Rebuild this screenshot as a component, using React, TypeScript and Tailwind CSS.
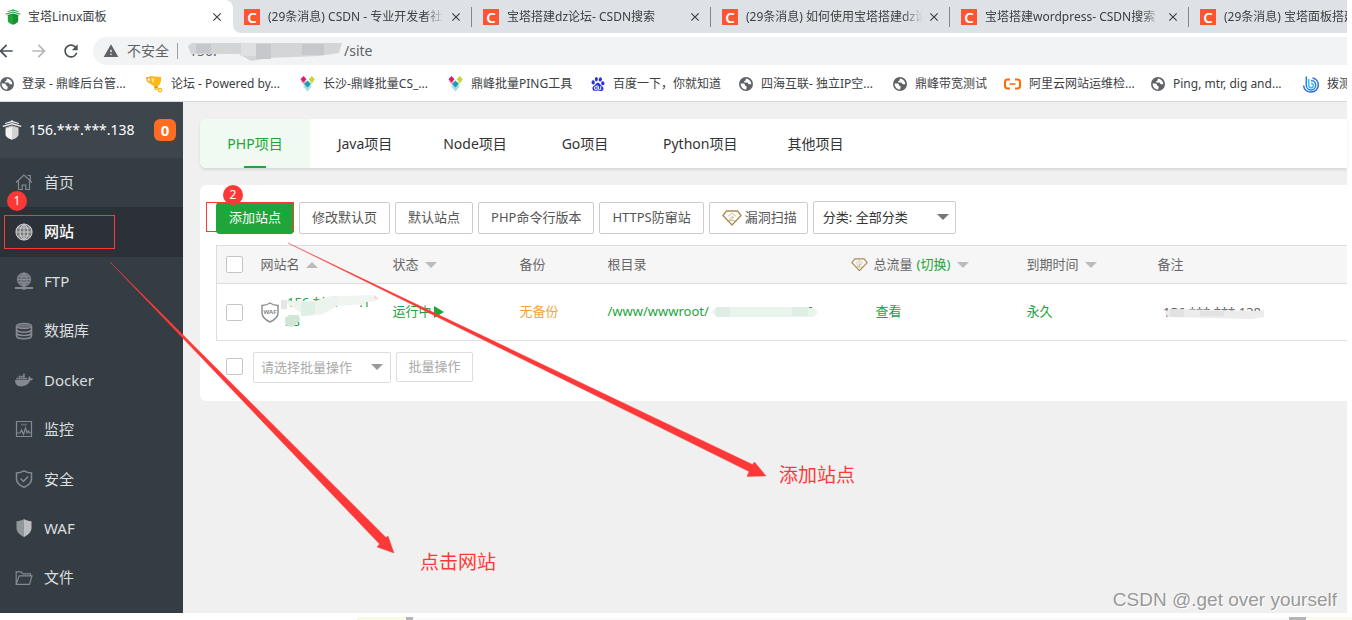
import type { ReactNode } from "react";
import clsx from "clsx";
import { FaDocker } from "react-icons/fa";
import { MdArrowBack, MdArrowForward, MdClose, MdRefresh, MdWarning } from "react-icons/md";
import { SiBaidu } from "react-icons/si";

/* ---------- icons ---------- */

function PagodaIcon({ size, className }: { size: number; className?: string }) {
  return (
    <svg width={size} height={size} viewBox="0 0 20 20" className={clsx("shrink-0", className)}>
      <path d="M10 0l1.500 1.300 5.500 1.600-.2 1L10 2.200 3.200 3.900 3 2.900l5.500-1.600z" fill="currentColor" />
      <path d="M10 3l9.500 2.800-.6 1.300L10 4.500 1.100 7.100.5 5.800z" fill="currentColor" />
      <path d="M10 5.500l6.500 2v6.800c0 2.600-3 4.200-6.500 5.500-3.500-1.300-6.500-2.900-6.500-5.500V7.500z" fill="currentColor" />
      <path d="M3 8.300L10 6.200l7 2.100" fill="none" stroke="#000" strokeWidth=".8" opacity=".3" />
      <path d="M10 7v12.800c3.500-1.300 6.500-2.900 6.500-5.500V8.800z" fill="#000" opacity=".13" />
    </svg>
  );
}

function CsdnIcon() {
  return (
    <span className="flex h-4 w-4 shrink-0 items-center justify-center bg-[#fc5531] text-[15px] leading-4 font-semibold text-white">
      C
    </span>
  );
}

function EarthIcon() {
  return (
    <svg width="14" height="14" viewBox="0 0 14 14" className="shrink-0">
      <circle cx="7" cy="7" r="7" fill="#5f6368" />
      <path d="M7.500 1.600C6 2.200 7.400 3.600 5.800 4c-1.200.3-.8 1.600.4 1.600h1.600c1.500 0 1 1.700 2.400 1.700h2.100c0-2.300-1.600-4.800-4.800-5.700z" fill="#fff" />
      <path d="M1.700 6.400h2.500c1.300 0 1.700.7 1.700 1.600 0 1 1.800.7 1.800 2 0 .9-.5 1.300-.5 2.500C3.800 12.500 1.400 9.600 1.700 6.400z" fill="#fff" />
    </svg>
  );
}

function TrophyIcon() {
  return (
    <svg width="17" height="17" viewBox="0 0 17 17" className="shrink-0">
      <path d="M3.500 0l11.500 1c.6 4-1 8-3.500 9.500C8.500 11 4.500 9 3.500 5.500z" fill="#fdb913" />
      <path d="M3.600 1.700H.8c0 2.600 1.400 4.600 4 5.300" fill="none" stroke="#f5a623" strokeWidth="1.400" />
      <path d="M5.500 2l3 .2-1 5c-1.300-1-2-3-2-5.200z" fill="#ffe28a" />
      <path d="M8 10.500l3-.4 1 1.800-3.500.6z" fill="#e89005" />
      <circle cx="14" cy="14.200" r="1.700" fill="none" stroke="#fdb913" strokeWidth="1.300" />
      <path d="M8 12.800l4-.6 1 1.400-4 .4z" fill="#fdb913" />
    </svg>
  );
}

function PetalsIcon() {
  return (
    <svg width="15" height="16" viewBox="0 0 15 16" className="shrink-0">
      <path d="M.5 5L4 3l3 4-1 4z" fill="#f6a9c4" />
      <path d="M14.500 5L11 4 8.500 7 9 11z" fill="#dfe9a0" />
      <path d="M3 10l4.500-1 4.500 1-4.500 5.500z" fill="#a9dce4" />
      <path d="M3.500 0l3 3.300-3 3.200-3-3.200z" fill="#e6176f" />
      <path d="M11.800 0l3 3.300-3 3.200-3-3.200z" fill="#c3d72f" />
      <path d="M7.500 4.500l3.300 3.500-3.300 3.500L4.200 8z" fill="#12a3b8" />
    </svg>
  );
}

function AliyunIcon() {
  return (
    <svg width="17" height="12" viewBox="0 0 17 12" className="shrink-0">
      <path d="M6 1.500H3.700C2.100 1.500 1 2.300 1 3.900v4.200c0 1.600 1.100 2.400 2.700 2.400H6M11 1.500h2.300c1.600 0 2.700.8 2.700 2.400v4.200c0 1.600-1.100 2.400-2.700 2.400H11" fill="none" stroke="#ff6a00" strokeWidth="2" />
      <path d="M5.500 5.300h6v1.500h-6z" fill="#ff6a00" />
    </svg>
  );
}

function DialIcon() {
  return (
    <svg width="16" height="17" viewBox="0 0 16 17" className="shrink-0">
      <path d="M3.300.6v8.600a4.700 4.700 0 1 0 4.700-4.700" fill="none" stroke="#1e80f0" strokeWidth="1.500" />
      <path d="M5.800 3v6.400a2.300 2.300 0 1 0 2.300-2.200" fill="none" stroke="#2fb5f5" strokeWidth="1.400" />
      <path d="M.6 9.500C1 13.500 4 16 8 16c4.300 0 7.300-3 7.300-7S12.500 2.500 9.500 2" fill="none" stroke="#2b6cf0" strokeWidth="1.500" />
    </svg>
  );
}

function GemIcon({ size }: { size: number }) {
  return (
    <svg width={size} height={size * 0.8} viewBox="0 0 20 16" className="shrink-0" fill="none" stroke="#a98a52">
      <path d="M4.500 1h11L19 5.500 10 15 1 5.500z" strokeWidth="1.300" strokeLinejoin="round" />
      <path d="M10 3L6 6.300M10 3l4 3.300M10 5.500v5M10 7.500h2.200M8 7.300v3.200M6.600 10.600h6.800" strokeWidth=".8" stroke="#c3ab7c" />
    </svg>
  );
}

function WafBadge() {
  return (
    <svg width="18" height="21" viewBox="0 0 18 21" className="shrink-0">
      <path d="M9 1c2.500 1.700 5 2.300 8 2.500v7.300c0 4.200-3.400 7.200-8 9.200-4.600-2-8-5-8-9.200V3.500C4 3.300 6.500 2.700 9 1z" fill="#fff" stroke="#8f8f8f" strokeWidth="1.500" />
      <text x="9" y="12" fontSize="6" fontWeight="700" textAnchor="middle" fill="#8a8a8a">WAF</text>
    </svg>
  );
}

function Triangle({ up, className }: { up?: boolean; className?: string }) {
  return (
    <svg width="12" height="6" viewBox="0 0 12 6" className={clsx("shrink-0", className)}>
      <path d={up ? "M0 6h12L6 0z" : "M0 0h12L6 6z"} fill="currentColor" />
    </svg>
  );
}

function LineIcon({ children }: { children: ReactNode }) {
  return (
    <svg width="18" height="18" viewBox="0 0 18 18" fill="none" stroke="currentColor" strokeWidth="1.200" className="shrink-0">
      {children}
    </svg>
  );
}

const globeLines = "M9 1v16M1 9h16M2.300 5h13.400M2.300 13h13.400M9 1C3.700 5 3.700 13 9 17M9 1c5.300 4 5.300 12 0 16";

/* ---------- data ---------- */

const browserTabs = [
  "(29条消息) CSDN - 专业开发者社",
  "宝塔搭建dz论坛- CSDN搜索",
  "(29条消息) 如何使用宝塔搭建dz论",
  "宝塔搭建wordpress- CSDN搜索",
  "(29条消息) 宝塔面板搭建",
];

const bookmarks = [
  { label: "登录 - 鼎峰后台管...", icon: <EarthIcon />, width: "w-[146px]" },
  { label: "论坛 - Powered by...", icon: <TrophyIcon />, width: "w-[154px]" },
  { label: "长沙-鼎峰批量CS_...", icon: <PetalsIcon />, width: "w-[148px]" },
  { label: "鼎峰批量PING工具", icon: <PetalsIcon />, width: "w-[143px]" },
  { label: "百度一下，你就知道", icon: <SiBaidu size={14} className="shrink-0 text-[#2932e1]" />, width: "w-[148px]" },
  { label: "四海互联- 独立IP空...", icon: <EarthIcon />, width: "w-[154px]" },
  { label: "鼎峰带宽测试", icon: <EarthIcon />, width: "w-[111px]" },
  { label: "阿里云网站运维检...", icon: <AliyunIcon />, width: "w-[147px]" },
  { label: "Ping, mtr, dig and...", icon: <EarthIcon />, width: "w-[152px]" },
  { label: "拨测", icon: <DialIcon />, width: "w-[60px]" },
];

const menu = [
  {
    label: "首页",
    icon: (
      <LineIcon>
        <path d="M1 9.500L9 2l8 7.500M12.500 2.500h2.800V7M3.500 8v8.500h3.700V12h3.600v4.500h3.700V8" />
      </LineIcon>
    ),
  },
  {
    label: "网站",
    active: true,
    icon: (
      <LineIcon>
        <circle cx="9" cy="9" r="8" fill="#777" />
        <path d={globeLines} />
      </LineIcon>
    ),
  },
  {
    label: "FTP",
    icon: (
      <LineIcon>
        <circle cx="9" cy="7.500" r="6.500" fill="#5d646a" />
        <path d="M9 1v13M2.500 7.500h13M3.800 4.500h10.400M3.800 10.500h10.400M9 1C5 4 5 11 9 14M9 1c4 3 4 10 0 13" />
        <path d="M0 16h18" strokeWidth="2" />
        <circle cx="9" cy="16" r="1.300" fill="currentColor" />
      </LineIcon>
    ),
  },
  {
    label: "数据库",
    icon: (
      <LineIcon>
        <ellipse cx="9" cy="4" rx="7.500" ry="2.700" fill="#6a7076" />
        <path d="M1.500 4v10c0 1.500 3.400 2.700 7.500 2.700s7.500-1.200 7.500-2.700V4M1.500 7.500c0 1.500 3.400 2.700 7.500 2.700s7.500-1.200 7.500-2.700M1.500 10.800c0 1.500 3.400 2.700 7.500 2.700s7.500-1.200 7.500-2.700" strokeWidth="1.600" />
      </LineIcon>
    ),
  },
  { label: "Docker", icon: <FaDocker size={18} className="shrink-0" /> },
  {
    label: "监控",
    icon: (
      <LineIcon>
        <path d="M1.500 1.500h15v15h-15zM1.500 13H5l1.500-3 2 4.500L10.500 8l1.500 5 1.500-2 1 2h2" />
        <path d="M6 4.700h6" strokeWidth="2" opacity=".5" />
      </LineIcon>
    ),
  },
  {
    label: "安全",
    icon: (
      <LineIcon>
        <path d="M9 .8c2.400 1.400 4.700 2 7.500 2.200v6c0 3.800-3.200 6.500-7.500 8.300C4.700 15.500 1.500 12.800 1.500 9V3C4.300 2.800 6.600 2.200 9 .8z" strokeWidth="1.500" />
        <path d="M5.500 8.500l3 3 4.500-5" strokeWidth="1.500" />
      </LineIcon>
    ),
  },
  {
    label: "WAF",
    icon: (
      <LineIcon>
        <path d="M9 0c2.300 1.500 4.700 2 7.500 2.300V9c0 4-3.300 7-7.500 9z" fill="#bcbfc2" stroke="none" />
        <path d="M9 0C6.700 1.500 4.300 2 1.500 2.300V9c0 4 3.300 7 7.500 9z" fill="#92979b" stroke="none" />
      </LineIcon>
    ),
  },
  {
    label: "文件",
    icon: (
      <LineIcon>
        <path d="M1.200 15V2.800h5l1.600 2h7.700v2M1.200 15.300h13.300l2.500-8.500H4.200z" />
      </LineIcon>
    ),
  },
];

const projectTabs = ["PHP项目", "Java项目", "Node项目", "Go项目", "Python项目", "其他项目"];
const actions = ["修改默认页", "默认站点", "PHP命令行版本", "HTTPS防窜站"];

/* ---------- browser chrome ---------- */

function BrowserBar() {
  return (
    <header className="overflow-hidden border-b border-[#d6d8db] bg-white text-xs text-[#3c4043]">
      <div className="flex h-[33px] overflow-hidden bg-white">
        <div className="bg-[#dee1e6]">
          <div className="flex h-[33px] w-[233px] items-center rounded-tr-lg bg-white pr-[9px] pl-[5px]">
            <PagodaIcon size={16} className="text-[#20a53a]" />
            <span className="ml-[7px] flex-1 whitespace-nowrap">宝塔Linux面板</span>
            <button aria-label="关闭" className="flex">
              <MdClose size={14} />
            </button>
          </div>
        </div>
        <div className="flex min-w-0 flex-1 overflow-hidden rounded-bl-lg bg-[#dee1e6]">
          {browserTabs.map((title) => (
            <div key={title} className="flex w-[239px] shrink-0 items-center">
              <div className="flex min-w-0 flex-1 items-center pr-2 pl-[11px]">
                <CsdnIcon />
                <span className="mr-1 ml-2 min-w-0 flex-1 overflow-hidden whitespace-nowrap [mask-image:linear-gradient(to_right,black_88%,transparent)]">
                  {title}
                </span>
                <button aria-label="关闭" className="flex">
                  <MdClose size={14} />
                </button>
              </div>
              <span className="h-5 w-px bg-[#80868b]" />
            </div>
          ))}
        </div>
      </div>

      <div className="flex h-9 items-center text-[#5f6368]">
        <button aria-label="后退" className="flex w-[29px]">
          <MdArrowBack size={20} className="-ml-1 text-[#4d5156]" />
        </button>
        <button aria-label="前进" className="flex w-8">
          <MdArrowForward size={20} className="text-[#b5b8bb]" />
        </button>
        <button aria-label="刷新" className="flex w-8">
          <MdRefresh size={20} className="text-[#4d5156]" />
        </button>
        <div className="flex h-7 flex-1 items-center rounded-l-full bg-[#f1f3f4] pl-2.5 text-sm">
          <MdWarning size={16} />
          <span className="ml-2">不安全</span>
          <span className="mr-2.5 ml-2 h-4 w-px bg-[#9aa0a6]" />
          <svg width="156" height="24" viewBox="0 0 156 24" className="shrink-0">
            <text x="1" y="17" fontSize="14" fill="#5f6368">156.***.</text>
            <path d="M0 7l4-3h150l-3 10-20 3-50 2-18 3-12-7H3z" fill="#d4d5d7" />
            <path d="M8 5h15v9H8zM68 5h15v15H68zM114 5h22v11h-22z" fill="#c6c8cb" />
            <path d="M53 4h15v13H53z" fill="#dfe0e1" />
          </svg>
          <span>/site</span>
        </div>
      </div>

      <nav className="flex h-8 items-center pb-0.5">
        {bookmarks.map((b) => (
          <a key={b.label} href="#" className={clsx("flex shrink-0 items-center gap-2 whitespace-nowrap", b.width)}>
            {b.icon}
            {b.label}
          </a>
        ))}
      </nav>
    </header>
  );
}

/* ---------- panel ---------- */

function Sidebar() {
  return (
    <aside className="flex w-[183px] shrink-0 flex-col bg-[#353d44] text-[15px] text-[#dcdedf]">
      <div className="flex h-14 items-center bg-[#3d464d] pr-[7px] pl-0.5 text-white">
        <PagodaIcon size={20} className="text-[#f2f2f2]" />
        <span className="ml-[7px] flex-1 text-sm whitespace-nowrap">156.***.***.138</span>
        <span className="flex h-[22px] w-[22px] items-center justify-center rounded-md bg-[#ff6c22] text-[15px] font-bold">
          0
        </span>
      </div>
      <nav className="flex flex-1 flex-col pb-2.5">
        {menu.map((item) => (
          <a
            key={item.label}
            href="#"
            className={clsx(
              "flex min-h-12 flex-1 items-center gap-[11px] pb-px pl-[15px]",
              item.active && "bg-[#2c3138] font-medium text-white"
            )}
          >
            <span className={item.active ? "text-[#c4c6c8]" : "text-[#848a8f]"}>{item.icon}</span>
            {item.label}
          </a>
        ))}
      </nav>
    </aside>
  );
}

function Checkbox({ label }: { label: string }) {
  return (
    <input
      type="checkbox"
      aria-label={label}
      className="block h-[17px] w-[17px] shrink-0 appearance-none rounded-xs border border-[#c6c6c6] bg-white checked:bg-[#20a53a]"
    />
  );
}

function SiteTable() {
  return (
    <table className="mt-[11px] w-full table-fixed border-collapse border-y border-l border-[#ddd] text-left">
      <colgroup>
        <col className="w-[35px]" />
        <col className="w-[132px]" />
        <col className="w-[127px]" />
        <col className="w-[88px]" />
        <col className="w-[243px]" />
        <col className="w-[176px]" />
        <col className="w-[131px]" />
        <col />
      </colgroup>
      <thead>
        <tr className="h-[38px] border-b border-[#ddd] bg-[#f6f6f6] text-[#666] *:px-0 *:pl-[9px] *:font-normal">
          <th>
            <Checkbox label="全选" />
          </th>
          <th>
            <span className="flex items-center gap-1.5">
              网站名 <Triangle up className="text-[#bbb]" />
            </span>
          </th>
          <th>
            <span className="flex items-center gap-1.5">
              状态 <Triangle className="text-[#bbb]" />
            </span>
          </th>
          <th>备份</th>
          <th>根目录</th>
          <th>
            <span className="flex items-center whitespace-nowrap">
              <GemIcon size={17} />
              <span className="mr-1 ml-1.5">总流量</span>
              <a href="#" className="text-[#20a53a]">(切换)</a>
              <Triangle className="ml-[7px] text-[#bbb]" />
            </span>
          </th>
          <th>
            <span className="flex items-center gap-1.5">
              到期时间 <Triangle className="text-[#bbb]" />
            </span>
          </th>
          <th>备注</th>
        </tr>
      </thead>
      <tbody>
        <tr className="h-[57px] text-[#20a53a] *:pl-[9px]">
          <td>
            <Checkbox label="选择站点" />
          </td>
          <td>
            <span className="flex items-center">
              <WafBadge />
              <svg width="100" height="40" viewBox="0 0 100 40" className="shrink-0">
                <text x="8" y="15" fontSize="13" fill="#20a53a">156.***.***.1</text>
                <text x="6" y="34" fontSize="13" fill="#20a53a">38</text>
                <path d="M4 9h32l16-5h34v8l-28 2-14 8-16 2-10-6z" fill="#edf4ee" />
                <path d="M60 4l36-1 4 4-3 2-37 4z" fill="#f1f5f1" />
                <path d="M2 8h6v9H2z" fill="#e4e6e4" />
                <path d="M22 10h14v12l-8 2h-6z" fill="#e0efe3" />
                <path d="M95 3l5 4h-5z" fill="#fbd9d6" />
                <path d="M6 27l4-4h10l1 5-7 7-6-1-2-3z" fill="#cfe7d4" />
              </svg>
            </span>
          </td>
          <td>
            <a href="#" className="flex items-center gap-0.5">
              运行中
              <svg width="10" height="12" viewBox="0 0 10 12">
                <path d="M0 0l10 6-10 6z" fill="#20a53a" />
              </svg>
            </a>
          </td>
          <td>
            <a href="#" className="text-[#f0a63c]">无备份</a>
          </td>
          <td>
            <a href="#" className="flex items-center gap-[3px]">
              /www/wwwroot/
              <svg width="106" height="12" viewBox="0 0 106 12">
                <path d="M0 6l4-5h97l5 5-4 5H4z" fill="#e9f4ec" />
                <path d="M4 1h14v10H4zM80 1h16v9H80z" fill="#dfeee2" />
                <path d="M97 1h3v1h-3z" fill="#20a53a" />
              </svg>
            </a>
          </td>
          <td>
            <a href="#" className="ml-[25px]">查看</a>
          </td>
          <td>
            <a href="#">永久</a>
          </td>
          <td>
            <svg width="112" height="20" viewBox="0 0 112 20">
              <text x="5" y="15" fontSize="13" fill="#666">156.***.***.138</text>
              <path d="M7 10l5-3 88 2 6-1v7l-12 2-84-2z" fill="#ececec" />
              <path d="M12 7h14v8H12zM42 9h24v5H42z" fill="#e2e2e2" />
            </svg>
          </td>
        </tr>
      </tbody>
    </table>
  );
}

function MainPanel() {
  return (
    <main className="min-w-0 flex-1 bg-[#f0f0f0] pt-[17px] pl-[17px] text-[13px] text-[#555]">
      <div className="flex h-[49px] rounded-l-md bg-white text-sm text-[#333] shadow-[0_2px_3px_rgba(0,0,0,0.1)]">
        {projectTabs.map((tab, i) => (
          <button
            key={tab}
            className={clsx(
              "relative min-w-[110px] px-[23px] whitespace-nowrap",
              i === 0 && "rounded-l-md bg-[#f0f9f2] text-[#20a53a]"
            )}
          >
            {tab}
            {i === 0 && <span className="absolute bottom-0 left-11 h-0.5 w-[22px] bg-[#20a53a]" />}
          </button>
        ))}
      </div>

      <section className="mt-[17px] rounded-l-md bg-white pt-4 pb-[18px] pl-4">
        <div className="flex h-[33px] items-end gap-[5px] whitespace-nowrap">
          <button className="h-8 w-[78px] rounded-sm bg-[#20a53a] text-white">添加站点</button>
          {actions.map((a) => (
            <button key={a} className="h-8 rounded-xs border border-[#ccc] bg-white px-3">
              {a}
            </button>
          ))}
          <button className="flex h-8 items-center gap-[3px] rounded-xs border border-[#ccc] bg-white pr-2.5 pl-3">
            <GemIcon size={20} />
            漏洞扫描
          </button>
          <div className="relative">
            <select aria-label="分类" className="h-[33px] w-[143px] appearance-none rounded-xs border border-[#ccc] bg-white pl-[9px] text-[#333]">
              <option>分类: 全部分类</option>
            </select>
            <Triangle className="pointer-events-none absolute top-[13px] right-[7px] text-[#777]" />
          </div>
        </div>

        <SiteTable />

        <div className="mt-[11px] flex items-start pl-2.5 text-[#aaa]">
          <span className="mt-1.5">
            <Checkbox label="全选站点" />
          </span>
          <div className="relative ml-2.5">
            <select aria-label="批量操作" className="h-[31px] w-[138px] appearance-none rounded-xs border border-[#ddd] bg-white pl-[7px]">
              <option>请选择批量操作</option>
            </select>
            <Triangle className="pointer-events-none absolute top-3 right-2 text-[#999]" />
          </div>
          <button className="ml-[5px] h-[30px] w-[77px] rounded-xs border border-[#ddd] bg-white">批量操作</button>
        </div>
      </section>
    </main>
  );
}

/* ---------- tutorial marks drawn over the page ---------- */

function Annotations() {
  return (
    <div className="pointer-events-none absolute inset-0 overflow-hidden text-[19px] leading-6 text-[#fc3938]">
      <svg width="800" height="600" viewBox="0 0 800 600" className="absolute top-0 left-0" fill="#fc3938">
        <path d="M110 262l276 275.500 2-1.500 6 17-17-6 2.500-3z" stroke="#fc3938" strokeWidth=".4" />
        <path d="M288 243l464.500 221.500 2-2.500 11.500 14-19 .5 2-5z" stroke="#fc3938" strokeWidth=".4" />
      </svg>
      <span className="absolute top-[215px] left-1 h-[34px] w-[111px] border border-[#fc3938]" />
      <span className="absolute top-[202px] left-[206px] h-[30px] w-[88px] border border-[#fc3938]" />
      <span className="absolute top-[191px] left-[7px] h-5 w-5 rounded-full bg-[#fc3938] text-center text-xs leading-5 text-white">
        1
      </span>
      <span className="absolute top-[185px] left-[223px] h-5 w-5 rounded-full bg-[#fc3938] text-center text-xs leading-5 text-white">
        2
      </span>
      <span className="absolute top-[463px] left-[779px]">添加站点</span>
      <span className="absolute top-[550px] left-[420px]">点击网站</span>
      <span className="absolute right-[15px] bottom-2 font-['Liberation_Sans',sans-serif] text-[#999] [text-shadow:1px_1px_0_#fff]">
        CSDN @.get over yourself
      </span>
    </div>
  );
}

export default function App() {
  return (
    <div className="relative flex min-h-screen flex-col overflow-hidden bg-white font-['Noto_Sans','Noto_Sans_CJK_SC',sans-serif]">
      <div className="mr-[5px] flex flex-1 flex-col">
        <BrowserBar />
        <div className="flex flex-1">
          <Sidebar />
          <MainPanel />
        </div>
      </div>
      <div className="mt-1 flex h-[3px] bg-[#fbfbfb]">
        <span className="w-[357px] bg-white" />
        <span className="w-[49px] bg-[#f7fbe3]" />
        <span className="w-[7px] bg-[#b5b5b5]" />
        <span className="flex-1" />
        <span className="w-[17px] bg-[#b5b5b5]" />
        <span className="w-[46px] bg-[#fafbee]" />
      </div>
      <Annotations />
    </div>
  );
}
